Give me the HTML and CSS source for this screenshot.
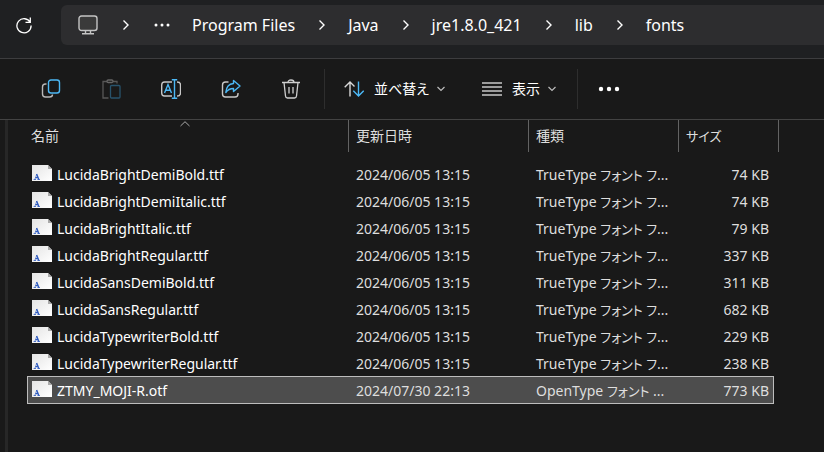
FILE: index.html
```html
<!DOCTYPE html>
<html lang="ja">
<head>
<meta charset="utf-8">
<title>fonts</title>
<link rel="stylesheet" href="styles.css">
</head>
<body>
<svg class="defs" aria-hidden="true">
  <defs>
    <linearGradient id="paper" x1="0" y1="0" x2="1" y2="1"><stop offset="0" stop-color="#e4e4e4"/><stop offset="1" stop-color="#fff"/></linearGradient>
    <symbol id="chev" viewBox="0 0 8 12"><path d="M1.5 1.5 6 6 1.5 10.5" fill="none" stroke="currentColor" stroke-width="1.4"/></symbol>
    <symbol id="down" viewBox="0 0 8 6"><path d="M.5 1 4 4.5 7.500 1" fill="none" stroke="currentColor" stroke-width="1.2"/></symbol>
    <symbol id="file" viewBox="0 0 20 16"><path d="M0 0H16L20 4V16H0Z" fill="url(#paper)"/><path d="M16 0V4H20Z" fill="#a9a9a9"/><path d="M2.800 14.500 4.800 9" fill="none" stroke="#5f80cc" stroke-width=".8"/><path d="M4.600 9 6.800 14.500M3.500 12.600H6" fill="none" stroke="#2f5bc0" stroke-width="1.400"/><path d="M1.600 14.500H4M5.400 14.500H8" fill="none" stroke="#2f5bc0" stroke-width=".8"/></symbol>
  </defs>
</svg>
<header class="nav">
  <button class="refresh" aria-label="最新の情報に更新"><svg width="18" height="18" viewBox="0 0 18 18"><path d="M15.300 6.500A7.100 7.100 0 1 0 16.100 9.500M15.300 1.500V6.300H10.500" fill="none" stroke="currentColor" stroke-width="1.300"/></svg></button>
  <nav class="address">
    <button class="pc" aria-label="PC"><svg width="20" height="20" viewBox="0 0 20 20" fill="none" stroke="#c4c4c4" stroke-width="1.400"><rect x="1" y="1" width="18" height="14.500" rx="2.500" fill="#3a3a3a"/><path d="M7.500 15.500V18.500M12.500 15.500V18.500M4 18.800H16"/></svg></button>
    <svg class="sep" width="8" height="12"><use href="#chev"/></svg>
    <button class="dots" aria-label="その他の場所"><svg width="16" height="4" viewBox="0 0 16 4" fill="currentColor"><circle cx="2" cy="2" r="1.500"/><circle cx="8" cy="2" r="1.500"/><circle cx="14" cy="2" r="1.500"/></svg></button>
    <a href="#">Program Files</a>
    <svg class="sep" width="8" height="12"><use href="#chev"/></svg>
    <a href="#">Java</a>
    <svg class="sep" width="8" height="12"><use href="#chev"/></svg>
    <a href="#">jre1.8.0_421</a>
    <svg class="sep" width="8" height="12"><use href="#chev"/></svg>
    <a href="#">lib</a>
    <svg class="sep" width="8" height="12"><use href="#chev"/></svg>
    <a href="#">fonts</a>
  </nav>
</header>
<div class="toolbar" role="toolbar">
  <div class="icons">
    <button aria-label="コピー"><svg width="20" height="20" viewBox="0 0 20 20" fill="none" stroke-width="1.400"><path d="M5.500 5H4.500Q1.500 5 1.500 8V15Q1.500 18 4.500 18H8.500Q11.500 18 11.500 15.500" stroke="#b8b8b8"/><rect x="7.500" y="1" width="11" height="13" rx="2.500" stroke="#4cb8f5"/></svg></button>
    <button disabled aria-label="貼り付け"><svg width="20" height="20" viewBox="0 0 20 20" fill="none" stroke-width="1.300"><path d="M6 2.500H2V19H7.500M12 2.500H16V4.500" stroke="#575757"/><rect x="6" y="1" width="6" height="2.500" rx="1.200" stroke="#646464"/><rect x="9.500" y="6.500" width="9.500" height="12.500" rx="1" stroke="#28536c"/></svg></button>
    <button aria-label="名前の変更"><svg width="20" height="20" viewBox="0 0 20 20" fill="none" stroke-width="1.400"><path d="M11 3H3.500Q.7 3 .7 6V14Q.7 17 3.500 17H11M16 3Q19.500 3 19.500 6V14Q19.500 17 16 17" stroke="#c8c8c8"/><path d="M3.500 14 7 5.500 10.500 14M4.700 11.300H9.300M13.500 1V19M10.800 .8H16.200M10.800 19.200H16.200" stroke="#4cb8f5"/></svg></button>
    <button aria-label="共有"><svg width="20" height="20" viewBox="0 0 20 20" fill="none" stroke-width="1.400" stroke-linejoin="round"><path d="M7.500 3H4.500Q1.500 3 1.500 6V15Q1.500 18 4.500 18H14Q17 18 17 15V14" stroke="#c8c8c8"/><path d="M12.500 1.500 19 7 12.500 12.500V9.500Q7.500 9.500 4.800 13.500Q5.500 5 12.500 4.500Z" stroke="#4cb8f5"/></svg></button>
    <button aria-label="削除"><svg width="20" height="20" viewBox="0 0 20 20" fill="none" stroke="#d0d0d0" stroke-width="1.300"><path d="M1 3.500H19M7 3.500Q7 1 10 1T13 3.500M3 3.500 4.500 17Q4.700 19 6.500 19H13.500Q15.300 19 15.500 17L17 3.500M8 8V14.500M12 8V14.500"/></svg></button>
  </div>
  <div class="group">
    <button class="menu"><svg width="20" height="16" viewBox="0 0 20 16" fill="none" stroke-width="1.400"><path d="M6 15.500V1M.7 6.300 6 1 10.500 5.500" stroke="#d8d8d8"/><path d="M14.500 .5V15M9.300 9.800 14.500 15 19.700 9.800" stroke="#4cb8f5"/></svg><span>並べ替え</span><svg class="caret" width="8" height="6"><use href="#down"/></svg></button>
    <button class="menu"><svg width="20" height="14" viewBox="0 0 20 14" stroke="#c8c8c8" stroke-width="1.300"><path d="M0 1H20M0 5H20M0 9H20M0 13H20"/></svg><span>表示</span><svg class="caret" width="8" height="6"><use href="#down"/></svg></button>
  </div>
  <button class="more" aria-label="もっと見る"><svg width="22" height="6" viewBox="0 0 22 6" fill="#fff"><circle cx="3" cy="3" r="2.200"/><circle cx="11" cy="3" r="2.200"/><circle cx="19" cy="3" r="2.200"/></svg></button>
</div>
<main class="content">
  <table>
    <colgroup><col class="c-name"><col class="c-date"><col class="c-type"><col class="c-size"></colgroup>
    <thead><tr><th aria-sort="ascending">名前<svg class="sort" width="10" height="6" viewBox="0 0 10 6"><path d="M.5 5 5 .7 9.500 5" fill="none" stroke="#aaa"/></svg></th><th>更新日時</th><th>種類</th><th><span class="kana">サイズ</span></th></tr></thead>
    <tbody>
      <tr><td><svg width="20" height="16"><use href="#file"/></svg>LucidaBrightDemiBold.ttf</td><td>2024/06/05 13:15</td><td>TrueType <span class="kana">フォント フ</span>...</td><td>74 KB</td></tr>
      <tr><td><svg width="20" height="16"><use href="#file"/></svg>LucidaBrightDemiItalic.ttf</td><td>2024/06/05 13:15</td><td>TrueType <span class="kana">フォント フ</span>...</td><td>74 KB</td></tr>
      <tr><td><svg width="20" height="16"><use href="#file"/></svg>LucidaBrightItalic.ttf</td><td>2024/06/05 13:15</td><td>TrueType <span class="kana">フォント フ</span>...</td><td>79 KB</td></tr>
      <tr><td><svg width="20" height="16"><use href="#file"/></svg>LucidaBrightRegular.ttf</td><td>2024/06/05 13:15</td><td>TrueType <span class="kana">フォント フ</span>...</td><td>337 KB</td></tr>
      <tr><td><svg width="20" height="16"><use href="#file"/></svg>LucidaSansDemiBold.ttf</td><td>2024/06/05 13:15</td><td>TrueType <span class="kana">フォント フ</span>...</td><td>311 KB</td></tr>
      <tr><td><svg width="20" height="16"><use href="#file"/></svg>LucidaSansRegular.ttf</td><td>2024/06/05 13:15</td><td>TrueType <span class="kana">フォント フ</span>...</td><td>682 KB</td></tr>
      <tr><td><svg width="20" height="16"><use href="#file"/></svg>LucidaTypewriterBold.ttf</td><td>2024/06/05 13:15</td><td>TrueType <span class="kana">フォント フ</span>...</td><td>229 KB</td></tr>
      <tr><td><svg width="20" height="16"><use href="#file"/></svg>LucidaTypewriterRegular.ttf</td><td>2024/06/05 13:15</td><td>TrueType <span class="kana">フォント フ</span>...</td><td>238 KB</td></tr>
      <tr class="selected"><td><svg width="20" height="16"><use href="#file"/></svg>ZTMY_MOJI-R.otf</td><td>2024/07/30 22:13</td><td>OpenType <span class="kana">フォント</span> ...</td><td>773 KB</td></tr>
    </tbody>
  </table>
</main>
</body>
</html>
```
FILE: styles.css
```css
* { box-sizing: border-box; }
body {
  margin: 0;
  min-height: 100vh;
  display: flex;
  flex-direction: column;
  overflow: hidden;
  background: #191919;
  color: #fff;
  font: 14px/20px "Noto Sans", "Noto Sans CJK JP", sans-serif;
  font-feature-settings: "palt";
}
svg { display: block; flex: none; }
.defs { position: absolute; width: 0; height: 0; }
button {
  display: flex;
  align-items: center;
  justify-content: center;
  padding: 0;
  border: 0;
  background: none;
  color: inherit;
  font: inherit;
  font-feature-settings: inherit;
}
a { color: inherit; text-decoration: none; }

.nav {
  display: flex;
  height: 59px;
  padding: 5px 0 13px 14px;
  background: #1f2022;
  border-bottom: 1px solid #3d3d3f;
}
.refresh { width: 20px; margin-right: 27px; }
.address {
  flex: 1;
  display: flex;
  align-items: center;
  height: 40px;
  padding-left: 17px;
  border-radius: 6px 0 0 6px;
  background: #2d2d2f;
  font-size: 16px;
  white-space: nowrap;
}
.sep { margin: 0 22px 0 23px; }
.pc + .sep { margin: 0 24px; }
.dots { margin-right: 22px; }

.toolbar {
  display: flex;
  align-items: center;
  height: 61px;
  border-bottom: 1px solid #434343;
}
.icons { display: flex; gap: 40px; padding: 0 23px 0 41px; }
.group {
  display: flex;
  align-items: center;
  gap: 37px;
  height: 40px;
  padding: 0 21px 0 19px;
  border: solid #2e2e2e;
  border-width: 0 1px;
}
.menu span { margin: 0 8px 0 10px; }
.caret { color: #bbb; }
.more { margin-left: 20px; }

.content {
  flex: 1;
  padding-left: 19px;
  margin-left: 5px;
  border-left: 3px solid #272727;
}
table { width: 747px; table-layout: fixed; border-collapse: collapse; }
.c-name { width: 322px; }
.c-date { width: 180px; }
.c-type { width: 150px; }
.c-size { width: 95px; }
th {
  position: relative;
  height: 40px;
  padding: 6px 0 0 7px;
  color: #dedede;
  font-weight: 400;
  text-align: left;
  vertical-align: top;
}
th:first-child { padding-left: 4px; }
th::after {
  content: "";
  position: absolute;
  top: 0;
  right: 0;
  width: 1px;
  height: 32px;
  background: #636363;
}
th:last-child::after { right: -5px; }
.sort { position: absolute; top: 1px; left: 153px; }
td {
  height: 27px;
  padding: 2px 0 0 7px;
  color: #dedede;
  white-space: nowrap;
}
td:first-child {
  display: flex;
  align-items: center;
  gap: 5px;
  padding-left: 5px;
  color: #fff;
}
td:first-child svg { margin-bottom: 4px; }
td:last-child { padding: 2px 5px 0 0; text-align: right; }
.kana { font-size: 13px; line-height: 1; }
.selected { background: #4d4d4d; outline: 1px solid #bdbdbd; outline-offset: -1px; }
.selected td { height: 28px; }
```
